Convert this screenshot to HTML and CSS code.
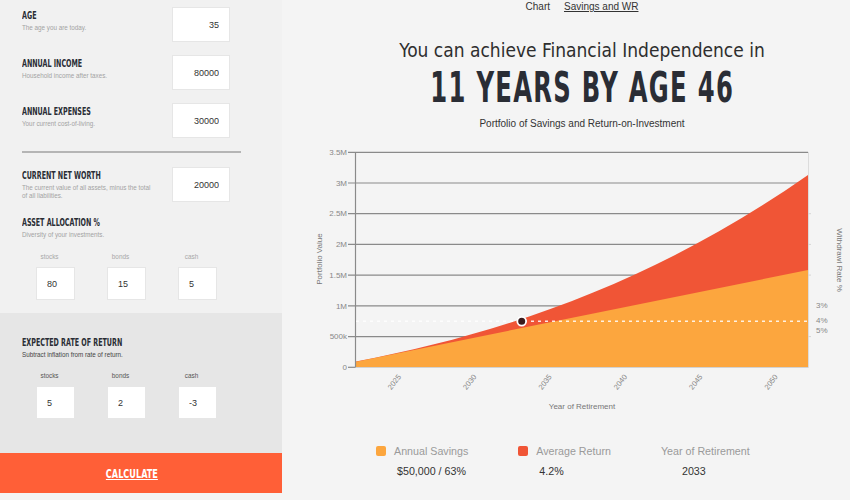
FILE: index.html
```html
<!doctype html>
<html lang="en">
  <head>
    <meta charset="UTF-8" />
    <meta name="viewport" content="width=device-width, initial-scale=1.0" />
    <title>FI Calculator</title>
    <link rel="stylesheet" href="styles.css">
  </head>
  <body>
    <div class="page">
      <aside class="sidebar">
        <div class="inputs">
          <div class="field">
            <div class="field-text">
              <h4 class="label"><span>AGE</span></h4>
              <p class="hint">The age you are today.</p>
            </div>
            <input type="text" value="35" />
          </div>

          <div class="field">
            <div class="field-text">
              <h4 class="label"><span>ANNUAL INCOME</span></h4>
              <p class="hint">Household income after taxes.</p>
            </div>
            <input type="text" value="80000" />
          </div>

          <div class="field">
            <div class="field-text">
              <h4 class="label"><span>ANNUAL EXPENSES</span></h4>
              <p class="hint">Your current cost-of-living.</p>
            </div>
            <input type="text" value="30000" />
          </div>

          <hr class="divider" />

          <div class="field field-networth">
            <div class="field-text">
              <h4 class="label"><span>CURRENT NET WORTH</span></h4>
              <p class="hint">
                The current value of all assets, minus the total<br />of all
                liabilities.
              </p>
            </div>
            <input type="text" value="20000" />
          </div>

          <div class="group">
            <h4 class="label"><span>ASSET ALLOCATION %</span></h4>
            <p class="hint">Diversity of your investments.</p>
            <div class="split">
              <label class="split-item"><span>stocks</span><input type="text" value="80" /></label>
              <label class="split-item"><span>bonds</span><input type="text" value="15" /></label>
              <label class="split-item"><span>cash</span><input type="text" value="5" /></label>
            </div>
          </div>
        </div>

        <div class="returns">
          <h4 class="label"><span>EXPECTED RATE OF RETURN</span></h4>
          <p class="hint">Subtract inflation from rate of return.</p>
          <div class="split">
            <label class="split-item"><span>stocks</span><input type="text" value="5" /></label>
            <label class="split-item"><span>bonds</span><input type="text" value="2" /></label>
            <label class="split-item"><span>cash</span><input type="text" value="-3" /></label>
          </div>
        </div>

        <button class="btn-calc"><span>CALCULATE</span></button>
      </aside>

      <main class="results">
        <div class="results-head">
          <nav class="tabs">
            <a class="tab">Chart</a>
            <a class="tab tab-active">Savings and WR</a>
          </nav>
          <h2 class="headline">You can achieve Financial Independence in</h2>
          <h1 class="big"><span>11 YEARS BY AGE 46</span></h1>
          <p class="caption">Portfolio of Savings and Return-on-Investment</p>
        </div>

        <svg class="chart" width="568" height="280" viewBox="282 140 568 280">
          <!-- grid -->
          <g stroke="#8a8a8a" stroke-width="1.2">
            <line x1="348" y1="152.3" x2="808" y2="152.3" />
            <line x1="348" y1="183" x2="808" y2="183" />
            <line x1="348" y1="213.7" x2="808" y2="213.7" />
            <line x1="348" y1="244.4" x2="808" y2="244.4" />
            <line x1="348" y1="275.1" x2="808" y2="275.1" />
            <line x1="348" y1="305.9" x2="808" y2="305.9" />
            <line x1="348" y1="336.6" x2="808" y2="336.6" />
            <line x1="348" y1="367.3" x2="356" y2="367.3" />
          </g>

          <!-- areas -->
          <path
            d="M356 361.5 C506.7 332.9 657.3 280.5 808 175 L808 367.3 L356 367.3 Z"
            fill="#f05536"
          />
          <path d="M356 361.7 L808 270 L808 367.3 L356 367.3 Z" fill="#fca63e" />

          <!-- axes -->
          <line x1="355.5" y1="152" x2="355.5" y2="367.5" stroke="#8a8a8a" stroke-width="1.2" />
          <line x1="355.5" y1="367.5" x2="808.5" y2="367.5" stroke="#d2d2d2" />
          <line x1="808.5" y1="152" x2="808.5" y2="367.5" stroke="#dcdcdc" />
          <g stroke="#d6d6d6">
            <line x1="808" y1="213.7" x2="811" y2="213.7" />
            <line x1="808" y1="244.4" x2="811" y2="244.4" />
            <line x1="808" y1="275.1" x2="811" y2="275.1" />
            <line x1="808" y1="336.6" x2="811" y2="336.6" />
          </g>

          <!-- withdrawal marker -->
          <line
            x1="356"
            y1="321.3"
            x2="808"
            y2="321.3"
            stroke="#fff"
            stroke-width="1.6"
            stroke-dasharray="3 4"
            opacity="0.85"
          />
          <circle cx="521.7" cy="321.3" r="4.4" fill="#3b1c1d" stroke="#fff" stroke-width="1.8" />

          <!-- y labels -->
          <g class="tick-text" text-anchor="end">
            <text x="347" y="155">3.5M</text>
            <text x="347" y="185.7">3M</text>
            <text x="347" y="216.4">2.5M</text>
            <text x="347" y="247.1">2M</text>
            <text x="347" y="277.8">1.5M</text>
            <text x="347" y="308.6">1M</text>
            <text x="347" y="339.3">500k</text>
            <text x="347" y="370">0</text>
          </g>

          <!-- x labels -->
          <g class="tick-text year" text-anchor="end">
            <text x="401.5" y="377" transform="rotate(-52 401.5 377)">2025</text>
            <text x="476.8" y="377" transform="rotate(-52 476.8 377)">2030</text>
            <text x="552.2" y="377" transform="rotate(-52 552.2 377)">2035</text>
            <text x="627.5" y="377" transform="rotate(-52 627.5 377)">2040</text>
            <text x="702.9" y="377" transform="rotate(-52 702.9 377)">2045</text>
            <text x="778.2" y="377" transform="rotate(-52 778.2 377)">2050</text>
          </g>

          <!-- withdrawal rates -->
          <g class="tick-text">
            <text x="816" y="307.7">3%</text>
            <text x="816" y="322.7">4%</text>
            <text x="816" y="332.7">5%</text>
          </g>

          <text class="axis-title" x="582" y="409.3" text-anchor="middle">Year of Retirement</text>
          <text class="axis-title" x="322" y="259" text-anchor="middle" transform="rotate(-90 322 259)">Portfolio Value</text>
          <text class="axis-title" x="836.5" y="260" text-anchor="middle" transform="rotate(90 836.5 260)">Withdrawl Rate %</text>
        </svg>

        <div class="legend">
          <div class="legend-item">
            <div class="legend-key"><i class="swatch swatch-savings"></i>Annual Savings</div>
            <div class="legend-value">$50,000 / 63%</div>
          </div>
          <div class="legend-item">
            <div class="legend-key"><i class="swatch swatch-return"></i>Average Return</div>
            <div class="legend-value">4.2%</div>
          </div>
          <div class="legend-item">
            <div class="legend-key">Year of Retirement</div>
            <div class="legend-value">2033</div>
          </div>
        </div>
      </main>
    </div>
  </body>
</html>
```

FILE: styles.css
```css
:root {
  --sidebar: #f1f1f1;
  --sidebar-dark: #e6e6e6;
  --background: #f4f4f4;
  --ink: #2a2d35;
  --text: #333;
  --muted: #a3a3a3;
  --orange: #fca63e;
  --red: #f05536;
  --accent: #ff5f37;
}

* {
  box-sizing: border-box;
}

body {
  margin: 0;
  background: var(--background);
  font-family: "Liberation Sans", Arial, sans-serif;
  color: var(--text);
  overflow: hidden;
}

.page {
  display: flex;
  width: 850px;
  height: 500px;
}

/* sidebar */

.sidebar {
  width: 282px;
  flex: none;
  align-self: flex-start;
  background: var(--sidebar);
}

.inputs {
  padding: 7px 0 13px 22px;
}

.label {
  margin: 0;
  font-family: "DejaVu Sans Condensed", "DejaVu Sans", sans-serif;
  font-weight: 700;
  font-size: 11px;
  line-height: 12px;
  color: var(--ink);
}

.label span {
  display: inline-block;
  white-space: nowrap;
  transform: scaleX(0.643);
  transform-origin: left center;
}

.hint {
  margin: 2px 0 0;
  font-size: 6.3px;
  line-height: 8px;
  color: var(--muted);
}

.field {
  display: flex;
  justify-content: space-between;
  align-items: flex-start;
  padding-right: 52px;
  margin-bottom: 13px;
}

.field-text {
  padding-top: 3px;
}

input {
  background: #fff;
  border: 1px solid #e6e6e6;
  font-family: "Liberation Sans", Arial, sans-serif;
  font-size: 9px;
  color: var(--text);
  outline: none;
}

.field input {
  width: 58px;
  height: 35px;
  padding: 0 10px;
  text-align: right;
}

.divider {
  margin: 0 41px 14px 0;
  border: 0;
  border-top: 2px solid #b5b5b5;
}

.field-networth {
  margin-bottom: 15px;
}

.split {
  display: flex;
  gap: 32px;
  margin: 14px 0 0 14px;
}

.split-item {
  display: flex;
  flex-direction: column;
  width: 39px;
}

.split-item span {
  width: 27px;
  text-align: center;
  font-size: 6.4px;
  line-height: 8px;
  color: #a8a8a8;
}

.split-item input {
  width: 39px;
  height: 33px;
  margin-top: 6px;
  padding: 0 10px;
}

.returns {
  background: var(--sidebar-dark);
  padding: 24px 0 34px 22px;
}

.returns .hint {
  color: #444;
}

.returns .split {
  margin-top: 13px;
}

.returns .split-item span {
  color: #555;
}

.btn-calc {
  display: block;
  width: 282px;
  height: 40px;
  padding: 0 19px 0 0;
  border: none;
  background: var(--accent);
  color: #fff;
  font-family: "DejaVu Sans Condensed", "DejaVu Sans", sans-serif;
  font-weight: 700;
  font-size: 12.5px;
  text-decoration: underline;
  cursor: pointer;
}

.btn-calc span {
  display: inline-block;
  transform: scaleX(0.725);
  text-decoration: underline;
}

/* results */

.results {
  flex: 1;
  display: flex;
  flex-direction: column;
}

.results-head {
  padding: 1px 0 0 32px;
  text-align: center;
}

.tabs {
  display: flex;
  justify-content: center;
  gap: 14px;
  font-size: 10px;
  line-height: 12px;
}

.tab {
  color: var(--text);
}

.tab-active {
  text-decoration: underline;
}

.headline {
  margin: 25px 0 0;
  font-family: "DejaVu Sans Condensed", "DejaVu Sans", sans-serif;
  font-weight: 400;
  font-size: 19px;
  line-height: 24px;
  color: #2e2e2e;
}

.big {
  margin: 4px 0 0;
  font-family: "DejaVu Sans Condensed", "DejaVu Sans", sans-serif;
  font-weight: 700;
  font-size: 42px;
  line-height: 44px;
  color: var(--ink);
}

.big span {
  display: inline-block;
  letter-spacing: 2px;
  transform: scaleX(0.643);
}

.caption {
  margin: 8px 0 0;
  font-size: 10px;
  line-height: 12px;
}

.chart {
  display: block;
  margin-top: 10px;
}

.tick-text {
  font-family: "Liberation Sans", Arial, sans-serif;
  font-size: 8px;
  fill: #888;
}

.tick-text.year {
  font-size: 7.5px;
}

.axis-title {
  font-family: "Liberation Sans", Arial, sans-serif;
  font-size: 8px;
  fill: #777;
}

.legend {
  display: flex;
  gap: 50px;
  margin: 24px 0 0 94px;
}

.legend-key {
  display: flex;
  align-items: center;
  gap: 8px;
  font-size: 10.7px;
  line-height: 14px;
  color: #9a9a9a;
}

.swatch {
  width: 10px;
  height: 10px;
  border-radius: 2px;
}

.swatch-savings {
  background: var(--orange);
}

.swatch-return {
  background: var(--red);
}

.legend-value {
  margin-top: 6px;
  padding-left: 21px;
  font-size: 10.7px;
  line-height: 14px;
  color: var(--text);
}
```
